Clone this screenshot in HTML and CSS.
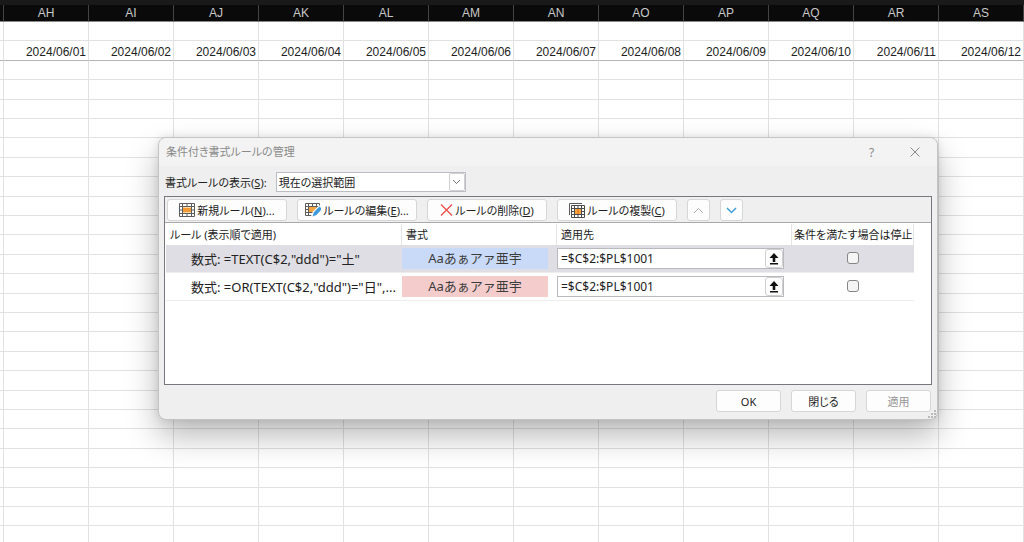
FILE: index.html
```html
<!DOCTYPE html>
<html lang="ja">
<head>
<meta charset="utf-8">
<title>条件付き書式ルールの管理</title>
<link rel="stylesheet" href="styles.css">
</head>
<body>
<main class="sheet">
  <table class="grid">
    <colgroup><col class="edge-col"><col span="12"></colgroup>
    <thead>
      <tr><th></th><th>AH</th><th>AI</th><th>AJ</th><th>AK</th><th>AL</th><th>AM</th><th>AN</th><th>AO</th><th>AP</th><th>AQ</th><th>AR</th><th>AS</th></tr>
    </thead>
    <tbody id="rows">
      <tr><td></td><td></td><td></td><td></td><td></td><td></td><td></td><td></td><td></td><td></td><td></td><td></td><td></td></tr>
      <tr class="dates"><td></td><td>2024/06/01</td><td>2024/06/02</td><td>2024/06/03</td><td>2024/06/04</td><td>2024/06/05</td><td>2024/06/06</td><td>2024/06/07</td><td>2024/06/08</td><td>2024/06/09</td><td>2024/06/10</td><td>2024/06/11</td><td>2024/06/12</td></tr>
    </tbody>
  </table>
</main>

<section class="dialog" role="dialog" aria-labelledby="dialog-title">
  <header class="titlebar">
    <h1 class="title" id="dialog-title">条件付き書式ルールの管理</h1>
    <button class="caption" type="button" aria-label="ヘルプ">?</button>
    <button class="caption" type="button" aria-label="閉じる"><svg width="10" height="10" viewBox="0 0 10 10"><path d="M.5.5l9 9M9.5.5l-9 9" fill="none" stroke="#8a8a8a"/></svg></button>
  </header>

  <div class="scope">
    <label for="scope">書式ルールの表示(<u>S</u>):</label>
    <div class="combo">
      <select id="scope"><option>現在の選択範囲</option></select>
      <span class="combo-arrow"><svg width="9" height="6" viewBox="0 0 9 6"><path d="M1 1l3.500 3.500L8 1" fill="none" stroke="#777"/></svg></span>
    </div>
  </div>

  <div class="panel">
    <div class="toolbar">
      <button class="btn tool" type="button">
        <svg width="16" height="14" viewBox="0 0 16 14"><path d="M.5.5h15v13H.5z" fill="#fff"/><path d="M4 4h8v6H4z" fill="#ffd9a3"/><path d="M4 5h8v4H4z" fill="#f39a35"/><path d="M.5.5h15v13H.5zM3.500.5v13M12.500.5v13M.5 3.500h15M.5 10.500h15M8 .5v3M8 10.500v3M.5 7h3M12.500 7h3" fill="none" stroke="#5c5c5c"/></svg>
        <span>新規ルール(<u>N</u>)...</span>
      </button>
      <button class="btn tool" type="button">
        <svg width="16" height="14" viewBox="0 0 16 14"><path d="M.5.5h14v12H.5z" fill="#fff"/><path d="M4 4h8v6H4z" fill="#f6a545"/><path d="M14.500 3V.5H.5v12h6M3.500.5v12M11.500.5v4M.5 3.500h13M.5 9.500h7M7.500.5v3M.5 6.500h3" fill="none" stroke="#5c5c5c"/><path d="M14.500 2L8 8.500 6 14l5.500-2L16 7.500z" fill="#fff"/><path d="M14.500 3.500L9 9l-1.500 4.500L11.500 12 16 7V5z" fill="#3d9bdc"/></svg>
        <span>ルールの編集(<u>E</u>)...</span>
      </button>
      <button class="btn tool" type="button">
        <svg width="13" height="12" viewBox="0 0 13 12"><path d="M1 .5l11 11M12 .5l-11 11" fill="none" stroke="#ee4b4b" stroke-width="1.300"/></svg>
        <span>ルールの削除(<u>D</u>)</span>
      </button>
      <button class="btn tool" type="button">
        <svg width="16" height="15" viewBox="0 0 16 15"><path d="M.5 12V.5H13" fill="none" stroke="#5c5c5c"/><path d="M2.500 2.500h13v12h-13z" fill="#fff"/><path d="M6 6h6v5H6z" fill="#f6a545"/><path d="M8 5h2v7H8z" fill="#ee8a25"/><path d="M2.500 2.500h13v12h-13zM5.500 2.500v12M12.500 2.500v12M2.500 5.500h13M2.500 11.500h13M9 2.500v3M9 11.500v3M2.500 8.500h3M12.500 8.500h3" fill="none" stroke="#4c4c4c"/></svg>
        <span>ルールの複製(<u>C</u>)</span>
      </button>
      <button class="btn move" type="button" aria-label="上へ移動"><svg width="11" height="7" viewBox="0 0 11 7"><path d="M1 6l4.500-4.500L10 6" fill="none" stroke="#b0b0b0"/></svg></button>
      <button class="btn move" type="button" aria-label="下へ移動"><svg width="11" height="7" viewBox="0 0 11 7"><path d="M1 1l4.500 4.500L10 1" fill="none" stroke="#42a0d8" stroke-width="1.500"/></svg></button>
    </div>
    <div class="list">
      <table class="rules">
        <colgroup><col class="c-rule"><col class="c-format"><col class="c-range"><col class="c-stop"></colgroup>
        <thead>
          <tr><th>ルール (表示順で適用)</th><th>書式</th><th>適用先</th><th>条件を満たす場合は停止</th></tr>
        </thead>
        <tbody>
          <tr class="selected">
            <td class="rule">数式: =TEXT(C$2,"ddd")="土"</td>
            <td><div class="swatch saturday">Aaあぁアァ亜宇</div></td>
            <td><div class="range"><input type="text" aria-label="適用先" value="=$C$2:$PL$1001"><button type="button" aria-label="範囲を選択"><svg width="10" height="12" viewBox="0 0 10 12"><path d="M5 0l4.500 5H6.300v4H3.700V5H.5zM1 10h8v1.500H1z" fill="#111"/></svg></button></div></td>
            <td class="stop"><input type="checkbox" aria-label="条件を満たす場合は停止"></td>
          </tr>
          <tr>
            <td class="rule">数式: =OR(TEXT(C$2,"ddd")="日",...</td>
            <td><div class="swatch sunday">Aaあぁアァ亜宇</div></td>
            <td><div class="range"><input type="text" aria-label="適用先" value="=$C$2:$PL$1001"><button type="button" aria-label="範囲を選択"><svg width="10" height="12" viewBox="0 0 10 12"><path d="M5 0l4.500 5H6.300v4H3.700V5H.5zM1 10h8v1.500H1z" fill="#111"/></svg></button></div></td>
            <td class="stop"><input type="checkbox" aria-label="条件を満たす場合は停止"></td>
          </tr>
        </tbody>
      </table>
    </div>
  </div>

  <footer class="actions">
    <button class="btn" type="button">OK</button>
    <button class="btn" type="button">閉じる</button>
    <button class="btn" type="button" disabled>適用</button>
  </footer>
  <svg class="grip" width="10" height="10" viewBox="0 0 10 10"><path d="M7 1h2v2H7zM4 4h2v2H4zM7 4h2v2H7zM1 7h2v2H1zM4 7h2v2H4zM7 7h2v2H7z" fill="#b9b9b9"/></svg>
</section>
<script src="sheet.js"></script>
</body>
</html>
```
FILE: sheet.js
```js
// Fill the worksheet with empty rows below the date row.
const rows = document.getElementById('rows');
const blank = rows.rows[0];
for (let i = 0; i < 25; i++) {
  rows.appendChild(blank.cloneNode(true));
}
```
FILE: styles.css
```css
* { box-sizing: border-box; }

body {
  margin: 0;
  height: 100vh;
  overflow: hidden;
  position: relative;
  background: #fff;
  color: #222;
  font-family: "Noto Sans", "Noto Sans CJK JP", sans-serif;
  font-size: 11px;
  font-feature-settings: "palt";
}

button, input, select { font: inherit; color: inherit; font-feature-settings: inherit; margin: 0; }

/* Worksheet */
.sheet { border-top: 5px solid #191919; font-family: "Liberation Sans", Arial, sans-serif; }
.grid { width: 100%; table-layout: fixed; border-collapse: separate; border-spacing: 0; }
.edge-col { width: 4px; }
.grid th, .grid td { padding: 0; border-right: 1px solid #e1e1e1; border-bottom: 1px solid #e1e1e1; }
.grid th {
  height: 17px;
  padding-top: 1px;
  background: #0a0a0a;
  color: #c8c8c8;
  font-size: 12px;
  font-weight: 400;
  line-height: 15px;
  border-right-color: #444;
  border-bottom-color: #888;
}
.grid td { height: 19px; font-size: 12px; line-height: 16px; text-align: right; white-space: nowrap; }
.grid tbody tr:nth-child(5n+2) td,
.grid tbody tr:nth-child(5n+4) td { height: 20px; }
.grid .dates td { padding-right: 2px; padding-top: 3px; border-bottom-color: #b5b5b5; }
.grid .dates td:first-child { padding: 0; }

/* Dialog window */
.dialog {
  position: absolute;
  top: 137px;
  left: 158px;
  right: 86px;
  border: 1px solid #c4c4c4;
  border-radius: 8px;
  background: #efefef;
  box-shadow: 0 16px 32px rgba(0, 0, 0, .28), 0 0 8px rgba(0, 0, 0, .1);
}
.titlebar {
  display: flex;
  align-items: center;
  height: 28px;
  padding: 0 1px 0 7px;
  border-radius: 8px 8px 0 0;
  background: #f3f3f3;
  color: #8a8a8a;
}
.title { flex: 1; margin: 0; font-size: 11px; font-weight: 400; line-height: 16px; }
.caption { display: grid; place-items: center; width: 43px; height: 28px; padding: 0; border: 0; background: none; font-size: 12px; }

.scope { display: flex; align-items: center; gap: 9px; padding: 6px 6px 4px; }
.combo { display: flex; align-items: center; width: 190px; height: 20px; border: 1px solid #bcbcc4; background: #fff; }
.combo select { flex: 1; min-width: 0; height: 18px; padding: 0 2px; border: 0; appearance: none; background: none; }
.combo-arrow { display: grid; place-items: center; width: 16px; height: 18px; border: 1px solid #d0d0d0; border-radius: 2px; pointer-events: none; }

.panel { margin: 0 5px; border: 1px solid #77777d; background: #fff; }
.toolbar { display: flex; gap: 10px; padding: 2px; height: 26px; background: #efefef; border-bottom: 1px solid #a9a9ae; }
.btn {
  display: flex;
  align-items: center;
  justify-content: center;
  gap: 2px;
  height: 22px;
  padding: 0;
  border: 1px solid #d6d6d6;
  border-radius: 3px;
  background: #fdfdfd;
  white-space: nowrap;
}
.tool { width: 120px; }
.move { width: 23px; }

.list { min-height: 161px; padding: 1px 17px 0 1px; }
.rules { width: 100%; table-layout: fixed; border-collapse: separate; border-spacing: 0; }
.c-rule { width: 236px; }
.c-format { width: 155px; }
.c-stop { width: 122px; }
.rules th { height: 21px; padding: 0 0 0 4px; border-right: 1px solid #e4e4e4; font-weight: 400; line-height: 20px; text-align: left; white-space: nowrap; }
.rules th:last-child { padding-left: 2px; }
.rules td { height: 28px; padding: 0; border-bottom: 1px solid #ededed; }
.selected td { background: #dfdee4; }
.rules .rule { padding-left: 25px; font-size: 13px; line-height: 18px; white-space: nowrap; }
.swatch { height: 21px; margin-right: 9px; font-size: 13px; line-height: 20px; text-align: center; color: #3c3c3c; font-feature-settings: normal; }
.saturday { background: #c9daf8; }
.sunday { background: #f4cccc; }
.range { display: flex; height: 21px; margin-right: 8px; border: 1px solid #b9b9bf; background: #fff; }
.range input { flex: 1; min-width: 0; padding: 0 3px; border: 0; background: none; font-size: 12px; }
.range button { display: grid; place-items: center; width: 18px; padding: 0; border: 1px solid #d0d0d0; border-radius: 3px; background: #fdfdfd; }
.stop { text-align: center; line-height: 12px; }
.stop input { width: 12px; height: 12px; appearance: none; border: 1px solid #858585; border-radius: 3px; background: #f5f5f5; }

.actions { display: flex; justify-content: flex-end; gap: 10px; padding: 5px 6px 7px; }
.actions .btn { width: 65px; }
.actions .btn:disabled { color: #969696; }
.grip { position: absolute; right: 0; bottom: 0; }
```
